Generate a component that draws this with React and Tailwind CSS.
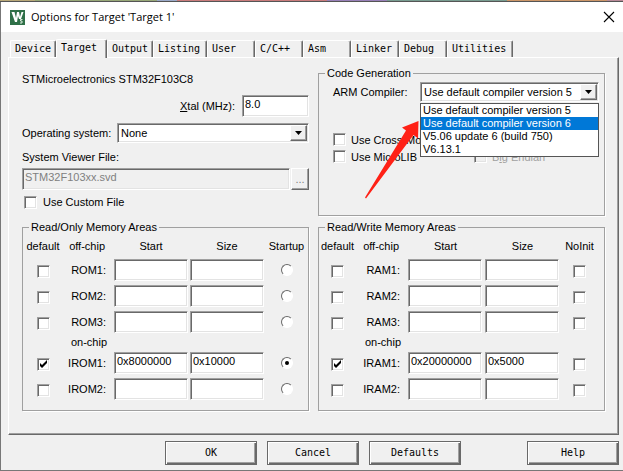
import React from "react";

const tabs = [
  { name: "Device", width: "w-[46px]" },
  { name: "Target", width: "w-[51px]", active: true },
  { name: "Output", width: "w-[46px]" },
  { name: "Listing", width: "w-[54px]" },
  { name: "User", width: "w-12" },
  { name: "C/C++", width: "w-12" },
  { name: "Asm", width: "w-12" },
  { name: "Linker", width: "w-12" },
  { name: "Debug", width: "w-12" },
  { name: "Utilities", width: "w-[66px]" },
];

const stripes = [
  "grow-[35] bg-[#b9a878]",
  "grow-[122] bg-[#98a878]",
  "grow-[20] bg-[#9aa9c8]",
  "grow-[150] bg-[#c97c7c]",
  "grow-[60] bg-[#9880b8]",
  "grow-[120] bg-[#789c90]",
  "grow-[100] bg-[#cc9668]",
  "grow-[16] bg-[#b98a98]",
];

const mono = "font-['DejaVu_Sans_Mono',monospace] text-[10px] leading-4";
const sunken =
  "border border-t-[#a0a0a0] border-l-[#a0a0a0] border-r-white border-b-white shadow-[inset_1px_1px_0_#696969,inset_-1px_-1px_0_#e3e3e3]";

function TextField({ className = "", ...props }) {
  return (
    <input
      type="text"
      className={`h-[22px] min-w-0 rounded-none bg-white px-0.5 pb-1 outline-none disabled:bg-[#f0f0f0] disabled:text-[#808080] ${sunken} ${className}`}
      {...props}
    />
  );
}

function CheckBox({ className = "", defaultChecked, ...props }) {
  return (
    <span className={`inline-grid size-[13px] shrink-0 ${className}`}>
      <input
        type="checkbox"
        defaultChecked={defaultChecked}
        className={`peer col-start-1 row-start-1 size-[13px] appearance-none bg-white disabled:bg-[#f0f0f0] ${sunken}`}
        {...props}
      />
      <svg
        viewBox="0 0 13 13"
        className="pointer-events-none invisible col-start-1 row-start-1 size-[13px] peer-checked:visible"
        aria-hidden="true"
      >
        <path d="M3 5v3l2 2 5-5V2L5 7z" fill="#000" />
      </svg>
    </span>
  );
}

function Radio(props) {
  return (
    <span className="inline-grid size-3 shrink-0">
      <input
        type="radio"
        className="peer col-start-1 row-start-1 size-3 appearance-none rounded-full border border-t-[#696969] border-r-white border-b-white border-l-[#696969] bg-white"
        {...props}
      />
      <svg
        viewBox="0 0 12 12"
        className="pointer-events-none invisible col-start-1 row-start-1 size-3 peer-checked:visible"
        aria-hidden="true"
      >
        <circle cx="6" cy="6" r="2" fill="#000" />
      </svg>
    </span>
  );
}

function Select({ id, options, className = "" }) {
  return (
    <span className={`grid h-5 ${className}`}>
      <select
        id={id}
        className={`col-start-1 row-start-1 h-5 w-full appearance-none rounded-none bg-white pl-[3px] outline-none ${sunken}`}
      >
        {options.map((o) => (
          <option key={o}>{o}</option>
        ))}
      </select>
      <span className="pointer-events-none col-start-1 row-start-1 mr-0.5 grid h-4 w-[17px] place-items-center self-center justify-self-end border border-t-white border-r-[#696969] border-b-[#696969] border-l-white bg-[#f0f0f0] shadow-[inset_-1px_-1px_0_#a0a0a0]">
        <svg viewBox="0 0 7 4" className="h-1 w-[7px]" aria-hidden="true">
          <path d="M0 0h7L3.5 4z" fill="#000" />
        </svg>
      </span>
    </span>
  );
}

function Group({ title, className = "", children }) {
  return (
    <fieldset
      className={`min-w-0 border border-[#a0a0a0] shadow-[1px_1px_0_#fff] ${className}`}
    >
      <legend className="ml-1.5 h-4 px-0.5 leading-4">{title}</legend>
      {children}
    </fieldset>
  );
}

function MemoryTable({ prefix, last, rows, cols, lastClass = "" }) {
  const row = (r) => (
    <tr key={r.name} className="h-[26px]">
      <td className="text-center">
        <CheckBox
          className="align-middle"
          defaultChecked={r.checked}
          aria-label={`${r.name} default`}
        />
      </td>
      <th scope="row" className="pr-[7px] text-right font-normal">
        {r.name}:
      </th>
      <td>
        <TextField
          className="mx-px block w-[74px]"
          defaultValue={r.start}
          aria-label={`${r.name} start`}
        />
      </td>
      <td>
        <TextField
          className="mx-px block w-[74px]"
          defaultValue={r.size}
          aria-label={`${r.name} size`}
        />
      </td>
      <td className={`text-center ${lastClass}`}>
        {last === "Startup" ? (
          <span className="flex justify-center">
            <Radio
              name={`${prefix}-startup`}
              defaultChecked={r.checked}
              aria-label={`${r.name} startup`}
            />
          </span>
        ) : (
          <CheckBox className="align-middle" aria-label={`${r.name} no init`} />
        )}
      </td>
    </tr>
  );
  return (
    <table className="w-full table-fixed border-collapse whitespace-nowrap">
      <colgroup>
        {cols.map((c, i) => (
          <col key={i} className={c} />
        ))}
      </colgroup>
      <thead>
        <tr className="h-[22px] [&>th]:font-normal">
          <th scope="col">default</th>
          <th scope="col" className="pr-2 text-right">
            off-chip
          </th>
          <th scope="col">Start</th>
          <th scope="col">Size</th>
          <th scope="col" className={lastClass}>
            {last}
          </th>
        </tr>
      </thead>
      <tbody>
        {rows.slice(0, 3).map(row)}
        <tr className="h-[15px] leading-[15px]">
          <td />
          <th scope="rowgroup" className="pr-1.5 text-right font-normal">
            on-chip
          </th>
          <td colSpan={3} />
        </tr>
        {rows.slice(3).map(row)}
      </tbody>
    </table>
  );
}

function PushButton({ children, className = "" }) {
  return (
    <button
      type="button"
      className={`h-6 w-[92px] border border-[#696969] bg-[#f0f0f0] shadow-[inset_1px_1px_0_#fff,inset_-1px_-1px_0_#696969,inset_-2px_-2px_0_#a0a0a0] ${mono} ${className}`}
    >
      {children}
    </button>
  );
}

const romRows = [
  { name: "ROM1" },
  { name: "ROM2" },
  { name: "ROM3" },
  { name: "IROM1", start: "0x8000000", size: "0x10000", checked: true },
  { name: "IROM2" },
];
const ramRows = [
  { name: "RAM1" },
  { name: "RAM2" },
  { name: "RAM3" },
  { name: "IRAM1", start: "0x20000000", size: "0x5000", checked: true },
  { name: "IRAM2" },
];
const compilers = [
  "Use default compiler version 5",
  "Use default compiler version 6",
  "V5.06 update 6 (build 750)",
  "V6.13.1",
];

export default function App() {
  return (
    <div className="flex min-h-screen w-full flex-col bg-[#f0f0f0] font-['Liberation_Sans',sans-serif] text-[11px] leading-4 text-black">
      <div className="flex h-0.5 border-b border-[#555]" aria-hidden="true">
        {stripes.map((s) => (
          <span key={s} className={s} />
        ))}
      </div>
      <div className="flex grow flex-col border-b border-l border-[#777]">
        <header className="flex h-[30px] items-center bg-white pr-2 pl-[9px]">
          <svg viewBox="0 0 15 15" className="size-[15px]" aria-hidden="true">
            <rect width="15" height="15" fill="#2f7048" />
            <path d="M1.500 2h3l1.500 6 1-6h2l1 5 1.500-5h2L11 9H9L8 6l-1 6H5z" fill="#fff" />
            <path d="M12.500 9.500h-2v1.500h1.500v2h-2" fill="none" stroke="#dcebdd" />
          </svg>
          <h1 className="ml-1.5 grow font-['Open_Sans',sans-serif] text-[11px]">
            Options for Target 'Target 1'
          </h1>
          <button type="button" aria-label="Close" className="grid size-3 place-items-center">
            <svg viewBox="0 0 12 12" className="size-3" aria-hidden="true">
              <path d="M1 1l10 10M11 1L1 11" stroke="#000" strokeWidth="1.100" />
            </svg>
          </button>
        </header>

        <main className="flex grow flex-col pt-[7px] pr-1 pl-[7px]">
          <div role="tablist" className="flex items-end pl-0.5">
            {tabs.map((t) => (
              <button
                key={t.name}
                type="button"
                role="tab"
                aria-selected={!!t.active}
                className={`shrink-0 rounded-t-xs border-t border-r border-l border-t-white border-r-[#696969] border-l-white bg-[#f0f0f0] pl-1 text-left shadow-[inset_-1px_0_0_#a0a0a0] ${mono} ${t.width} ${
                  t.active ? "z-10 -mb-px h-[19px] pb-0.5" : "h-[17px]"
                }`}
              >
                {t.name}
              </button>
            ))}
          </div>

          <section className="grid grid-cols-2 gap-x-[9px] gap-y-[3px] border border-t-white border-r-[#696969] border-b-[#696969] border-l-white pt-[7px] pr-[13px] pb-[23px] pl-[13px] shadow-[inset_-1px_-1px_0_#a0a0a0]">
            <div className="pt-1.5 pb-1.5 whitespace-nowrap">
              <p>STMicroelectronics STM32F103C8</p>
              <div className="mt-2 flex items-center justify-end gap-[7px]">
                <label htmlFor="xtal">
                  <u>X</u>tal (MHz):
                </label>
                <TextField id="xtal" className="w-[67px]" defaultValue="8.0" />
              </div>
              <div className="mt-1.5 flex items-center">
                <label htmlFor="os" className="w-[95px]">
                  Operating system:
                </label>
                <Select id="os" options={["None"]} className="grow" />
              </div>
              <label htmlFor="svd" className="mt-1.5 block">
                System Viewer File:
              </label>
              <div className="mt-[3px] flex gap-px">
                <TextField id="svd" disabled className="grow" defaultValue="STM32F103xx.svd" />
                <button
                  type="button"
                  disabled
                  aria-label="Browse"
                  className="h-[22px] w-[18px] border border-t-white border-r-[#696969] border-b-[#696969] border-l-white text-[#808080] shadow-[inset_-1px_-1px_0_#a0a0a0]"
                >
                  ...
                </button>
              </div>
              <label className="mt-1 flex items-center gap-1.5 pl-[2px]">
                <CheckBox />
                Use Custom File
              </label>
            </div>

            <Group title="Code Generation">
              <div className="mt-px flex items-center pr-[5px] pl-3.5">
                <label htmlFor="compiler" className="w-[87px]">
                  ARM Compiler:
                </label>
                <div className="relative grow">
                  <Select id="compiler" options={compilers} />
                  <ul
                    role="listbox"
                    aria-label="ARM Compiler"
                    className="absolute inset-x-0 top-[21px] z-10 border border-[#555] bg-white leading-[13px]"
                  >
                    {compilers.map((c, i) => (
                      <li
                        key={c}
                        role="option"
                        aria-selected={i === 1}
                        className="h-[13px] pl-0.5 aria-selected:bg-[#0078d7] aria-selected:text-white"
                      >
                        {c}
                      </li>
                    ))}
                  </ul>
                  <svg
                    viewBox="0 0 56 82"
                    className="pointer-events-none absolute top-[37px] -left-14 z-20 h-[82px] w-14"
                    aria-hidden="true"
                  >
                    <path d="M54.500 2L38 8.500l4 3L1 78.500l1 1L49.500 16l4.500 3.500z" fill="#ff2116" />
                  </svg>
                </div>
              </div>
              <div className="mt-[29px] pl-3.5 whitespace-nowrap">
                <label className="flex h-[17px] items-center gap-[5px]">
                  <CheckBox />
                  Use Cross-Module Optimization
                </label>
                <div className="flex">
                  <label className="flex h-[17px] w-[141px] items-center gap-[5px]">
                    <CheckBox />
                    Use MicroLIB
                  </label>
                  <label className="flex h-[17px] items-center gap-[5px] text-[#a0a0a0]">
                    <CheckBox disabled />
                    <span>
                      B<u>i</u>g Endian
                    </span>
                  </label>
                </div>
              </div>
            </Group>

            <Group title="Read/Only Memory Areas" className="pb-2">
              <MemoryTable
                prefix="rom"
                last="Startup"
                rows={romRows}
                cols={["w-10", "w-[50px]", "w-[76px]", "w-[76px]", "w-auto"]}
              />
            </Group>
            <Group title="Read/Write Memory Areas" className="pb-2">
              <MemoryTable
                prefix="ram"
                last="NoInit"
                rows={ramRows}
                cols={["w-[37px]", "w-[51px]", "w-[77px]", "w-[77px]", "w-auto"]}
                lastClass="pr-1.5"
              />
            </Group>
          </section>

          <footer className="flex justify-end gap-2.5 pt-1.5 pb-1">
            <PushButton>OK</PushButton>
            <PushButton>Cancel</PushButton>
            <PushButton>Defaults</PushButton>
            <PushButton className="ml-14">Help</PushButton>
          </footer>
        </main>
      </div>
    </div>
  );
}
